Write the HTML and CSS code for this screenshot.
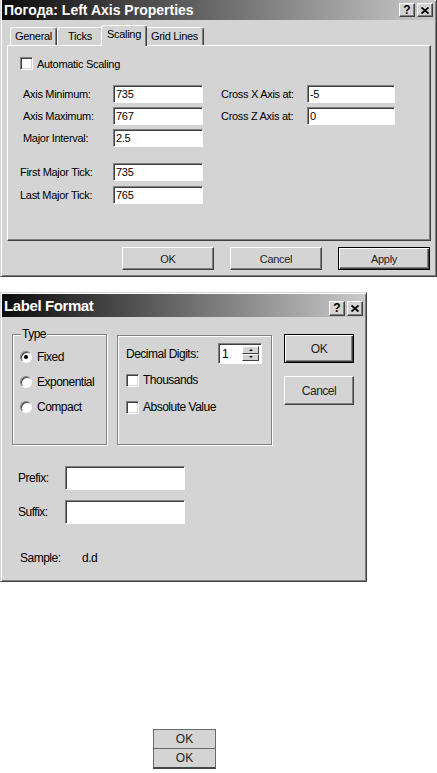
FILE: index.html
```html
<!DOCTYPE html>
<html lang="ru">
<head>
    <meta charset="utf-8">
    <title>Axis Properties</title>
    <link rel="stylesheet" href="styles.css">
</head>
<body>
    <!-- axis properties dialog, top edge is cropped -->
    <div class="dlg dlg-axis">
        <div class="caption">
            <span class="caption-text">Погода: Left Axis Properties</span>
            <span class="cap-btns">
                <span class="cap-btn">?</span>
                <span class="cap-btn">
                    <svg width="8" height="7" viewBox="0 0 8 7"><path d="M0.5 0.5 L7.5 6.5 M7.5 0.5 L0.5 6.5" stroke="#000" stroke-width="1.8"/></svg>
                </span>
            </span>
        </div>
        <div class="body1">
            <div class="tabs">
                <div class="tab t-general">General</div>
                <div class="tab t-ticks">Ticks</div>
                <div class="tab t-scaling active">Scaling</div>
                <div class="tab t-grid">Grid Lines</div>
            </div>
            <div class="panel">
                <div class="check-row auto">
                    <span class="check"></span>
                    <span>Automatic Scaling</span>
                </div>
                <div class="scale-grid">
                    <span>Axis Minimum:</span>
                    <input class="field" type="text" value="735">
                    <span class="right-label">Cross X Axis at:</span>
                    <input class="field field-r" type="text" value="-5">

                    <span>Axis Maximum:</span>
                    <input class="field" type="text" value="767">
                    <span class="right-label">Cross Z Axis at:</span>
                    <input class="field field-r" type="text" value="0">

                    <span>Major Interval:</span>
                    <input class="field" type="text" value="2.5">
                </div>
                <div class="tick-grid">
                    <span>First Major Tick:</span>
                    <input class="field" type="text" value="735">
                    <span>Last Major Tick:</span>
                    <input class="field" type="text" value="765">
                </div>
            </div>
            <div class="btn-row">
                <button class="btn">OK</button>
                <button class="btn">Cancel</button>
                <button class="btn default">Apply</button>
            </div>
        </div>
    </div>

    <!-- label format dialog -->
    <div class="dlg dlg-fmt">
        <div class="caption caption-fmt">
            <span class="caption-text">Label Format</span>
            <span class="cap-btns">
                <span class="cap-btn">?</span>
                <span class="cap-btn">
                    <svg width="8" height="7" viewBox="0 0 8 7"><path d="M0.5 0.5 L7.5 6.5 M7.5 0.5 L0.5 6.5" stroke="#000" stroke-width="1.8"/></svg>
                </span>
            </span>
        </div>
        <div class="fmt-top">
            <fieldset class="grp grp-type">
                <legend>Type</legend>
                <div class="radios">
                    <div class="radio-row"><span class="radio on"></span>Fixed</div>
                    <div class="radio-row"><span class="radio"></span>Exponential</div>
                    <div class="radio-row"><span class="radio"></span>Compact</div>
                </div>
            </fieldset>
            <fieldset class="grp grp-digits">
                <div class="digits-row">
                    <span class="digits-label">Decimal Digits:</span>
                    <span class="spin">
                        <span class="spin-val">1</span>
                        <span class="spin-btns">
                            <span class="spin-btn"><span class="arr-up"></span></span>
                            <span class="spin-btn"><span class="arr-dn"></span></span>
                        </span>
                    </span>
                </div>
                <div class="check-row thousands"><span class="check"></span>Thousands</div>
                <div class="check-row absval"><span class="check"></span>Absolute Value</div>
            </fieldset>
            <div class="fmt-btns">
                <button class="btn btn-fmt default">OK</button>
                <button class="btn btn-fmt">Cancel</button>
            </div>
        </div>
        <div class="fmt-fields">
            <div class="fmt-row"><span class="fmt-label">Prefix:</span><input class="field field-fmt" type="text" value=""></div>
            <div class="fmt-row"><span class="fmt-label">Suffix:</span><input class="field field-fmt" type="text" value=""></div>
        </div>
        <div class="sample">
            <span class="sample-label">Sample:</span>
            <span>d.d</span>
        </div>
    </div>

    <div class="stack">
        <button class="flat">OK</button>
        <button class="flat flat-last">OK</button>
    </div>
</body>
</html>
```

FILE: styles.css
```css
body {
    margin: 0;
    background: #fff;
    font-family: "Liberation Sans", Arial, sans-serif;
    font-size: 11px;
    color: #000;
}
button, input {
    font: inherit;
    letter-spacing: inherit;
    color: inherit;
    margin: 0;
}

/* window frame */
.dlg {
    box-sizing: border-box;
    background: #d4d4d4;
    border: 1px solid;
    border-color: #d4d4d4 #404040 #404040 #d4d4d4;
    box-shadow: inset 1px 1px #fff, inset -1px -1px #808080;
    padding: 1px;
}
.dlg-axis {
    width: 437px;
    height: 277px;
    border-top: 0;
    padding-top: 0;
    letter-spacing: -0.3px;
}
.caption {
    display: flex;
    align-items: center;
    justify-content: space-between;
    height: 20px;
    padding: 0 2px 0 2px;
    background: linear-gradient(to right, #0c0c0c, #cacaca);
    color: #fff;
    font-family: "Liberation Sans", Arial, sans-serif;
    font-weight: bold;
    font-size: 14px;
    letter-spacing: 0;
}
.cap-btns {
    display: flex;
    gap: 2px;
}
.cap-btn {
    box-sizing: border-box;
    width: 16px;
    height: 14px;
    display: flex;
    align-items: center;
    justify-content: center;
    background: #d4d4d4;
    border: 1px solid;
    border-color: #fff #404040 #404040 #fff;
    box-shadow: inset -1px -1px #808080;
    color: #000;
    font-size: 12px;
    line-height: 12px;
}

/* tabs */
.body1 {
    padding: 5px 4px 0 5px;
}
.tabs {
    display: flex;
    align-items: flex-end;
    height: 20px;
    padding-left: 3px;
}
.tab {
    box-sizing: border-box;
    height: 18px;
    line-height: 16px;
    text-align: center;
    border: 1px solid;
    border-color: #fff #404040 transparent #fff;
    border-bottom: 0;
    border-radius: 3px 3px 0 0;
    box-shadow: inset -1px 0 #808080;
}
.t-general { width: 47px; }
.t-ticks { width: 46px; }
.t-scaling { width: 42px; }
.t-grid { width: 59px; }
.tab.active {
    width: 46px;
    height: 21px;
    line-height: 17px;
    margin: 0 -2px -1px;
    position: relative;
    z-index: 1;
    background: #d4d4d4;
}
.panel {
    box-sizing: border-box;
    height: 196px;
    border: 1px solid;
    border-color: #fff #404040 #404040 #fff;
    box-shadow: inset -1px -1px #808080;
}

/* check boxes and fields */
.check-row {
    display: flex;
    align-items: center;
    gap: 4px;
}
.check {
    box-sizing: border-box;
    width: 13px;
    height: 13px;
    background: #fff;
    border: 1px solid;
    border-color: #808080 #fff #fff #808080;
    box-shadow: inset 1px 1px #404040, inset -1px -1px #d4d4d4;
}
.auto {
    margin: 11px 0 0 12px;
    height: 13px;
}
.field {
    box-sizing: border-box;
    width: 90px;
    height: 18px;
    padding: 0 2px;
    background: #fff;
    border: 1px solid;
    border-color: #808080 #fff #fff #808080;
    box-shadow: inset 1px 1px #404040;
    outline: none;
}
.field-r {
    width: 88px;
}
.scale-grid {
    display: grid;
    grid-template-columns: 90px 90px 104px 88px;
    grid-auto-rows: 18px;
    row-gap: 4px;
    align-items: center;
    margin-top: 15px;
    padding-left: 15px;
}
.right-label {
    padding-left: 18px;
}
.tick-grid {
    display: grid;
    grid-template-columns: 93px 90px;
    grid-auto-rows: 18px;
    row-gap: 5px;
    align-items: center;
    margin-top: 16px;
    padding-left: 12px;
}

/* buttons */
.btn-row {
    display: flex;
    justify-content: flex-end;
    gap: 16px;
    margin-top: 6px;
    padding-right: 1px;
}
.btn {
    box-sizing: border-box;
    width: 92px;
    height: 23px;
    padding: 0;
    background: #d4d4d4;
    color: #222;
    border: 1px solid;
    border-color: #fff #404040 #404040 #fff;
    box-shadow: inset -1px -1px #808080;
}
.btn.default {
    border-color: #000;
    box-shadow: inset 1px 1px #fff, inset -1px -1px #404040, inset -2px -2px #808080;
}

/* label format dialog */
.dlg-fmt {
    width: 367px;
    height: 290px;
    margin-top: 15px;
    font-size: 12px;
    letter-spacing: -0.5px;
}
.caption-fmt {
    height: 23px;
    font-size: 15px;
    letter-spacing: -0.4px;
}
.caption-fmt .cap-btn {
    height: 15px;
    margin-top: 5px;
    letter-spacing: 0;
}
.fmt-top {
    display: flex;
    align-items: flex-start;
    padding: 10px 0 0 10px;
}
.grp {
    box-sizing: border-box;
    margin: 0;
    min-width: 0;
    border: 1px solid #808080;
    box-shadow: inset 1px 1px #fff, 1px 1px #fff;
}
.grp legend {
    margin-left: 1px;
    padding: 0 1px;
    line-height: 14px;
    background: #d4d4d4;
}
.grp-type {
    width: 95px;
    height: 118px;
    padding: 0 0 0 7px;
}
.radios {
    display: flex;
    flex-direction: column;
    gap: 11px;
    padding-top: 9px;
}
.radio-row {
    display: flex;
    align-items: center;
    gap: 5px;
    height: 14px;
    line-height: 14px;
}
.radio {
    box-sizing: border-box;
    width: 12px;
    height: 12px;
    border-radius: 50%;
    background: #fff;
    border: 1px solid;
    border-color: #808080 #fff #fff #808080;
    box-shadow: inset 1px 1px #404040;
    display: flex;
    align-items: center;
    justify-content: center;
}
.radio.on::after {
    content: "";
    width: 4px;
    height: 4px;
    border-radius: 50%;
    background: #000;
}
.grp-digits {
    width: 155px;
    height: 110px;
    margin: 8px 0 0 10px;
    padding: 7px 0 0 8px;
}
.digits-row {
    display: flex;
    align-items: center;
    height: 21px;
}
.digits-label {
    width: 92px;
}
.spin {
    box-sizing: border-box;
    display: flex;
    width: 44px;
    height: 21px;
    padding: 2px;
    background: #fff;
    border: 1px solid;
    border-color: #808080 #fff #fff #808080;
    box-shadow: inset 1px 1px #404040;
}
.spin-val {
    flex: 1;
    line-height: 16px;
    padding-left: 1px;
}
.spin-btns {
    display: flex;
    flex-direction: column;
    width: 17px;
}
.spin-btn {
    flex: 1;
    display: flex;
    align-items: center;
    justify-content: center;
    background: #d4d4d4;
    border: 1px solid;
    border-color: #fff #404040 #404040 #fff;
}
.arr-up, .arr-dn {
    width: 0;
    height: 0;
    border-left: 2px solid transparent;
    border-right: 2px solid transparent;
}
.arr-up { border-bottom: 2px solid #000; }
.arr-dn { border-top: 2px solid #000; }
.thousands {
    margin-top: 9px;
    height: 14px;
}
.absval {
    margin-top: 13px;
    height: 14px;
}
.fmt-btns {
    display: flex;
    flex-direction: column;
    gap: 13px;
    margin: 7px 0 0 12px;
}
.btn-fmt {
    width: 70px;
    height: 29px;
}
.fmt-fields {
    display: flex;
    flex-direction: column;
    gap: 10px;
    margin-top: 21px;
    padding-left: 16px;
}
.fmt-row {
    display: flex;
    align-items: center;
}
.fmt-label {
    width: 47px;
}
.field-fmt {
    width: 120px;
    height: 24px;
}
.sample {
    display: flex;
    margin-top: 27px;
    padding-left: 18px;
    line-height: 14px;
}
.sample-label {
    width: 62px;
}

/* stray buttons at the bottom */
.stack {
    display: flex;
    flex-direction: column;
    width: 63px;
    margin: 147px 0 0 153px;
}
.flat {
    box-sizing: border-box;
    height: 20px;
    padding: 0;
    background: #d4d4d4;
    border: 1px solid #6a6a6a;
    font-size: 12px;
    color: #222;
}
.flat-last {
    border-top: 0;
    border-bottom: 2px solid #444;
}
```
